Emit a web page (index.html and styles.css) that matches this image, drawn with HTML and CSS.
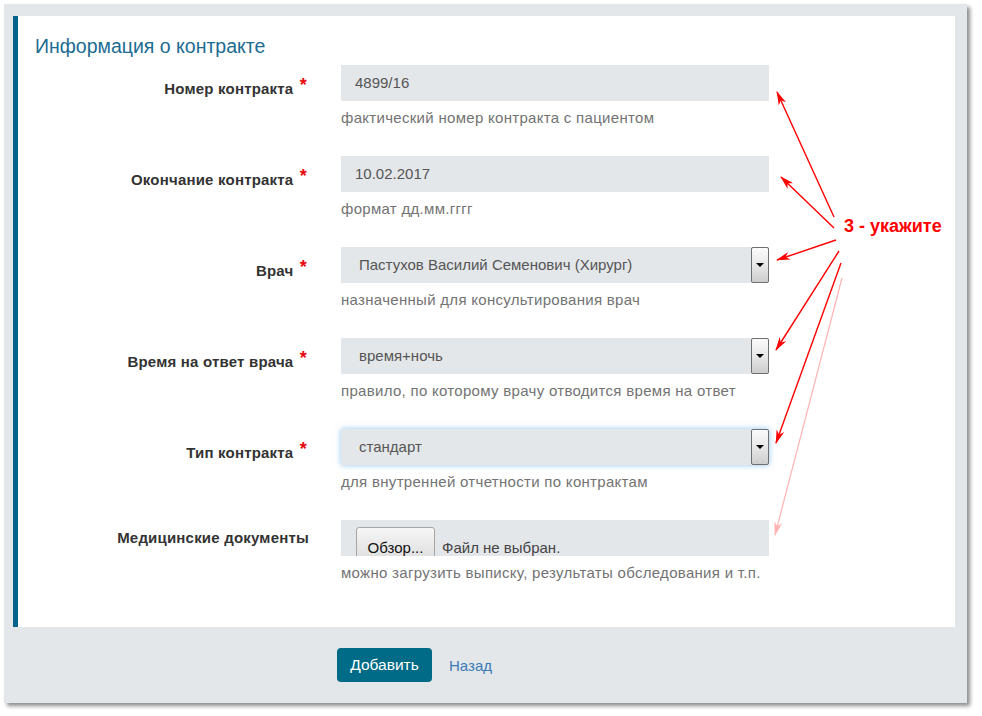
FILE: index.html
```html
<!DOCTYPE html>
<html lang="ru">
<head>
    <meta charset="UTF-8">
    <title>Информация о контракте</title>
    <link rel="stylesheet" href="styles.css">
</head>
<body>

<div class="frame">
    <div class="card">
        <h3 class="card-title">Информация о контракте</h3>

        <div class="row">
            <label class="row-label">Номер контракта <span class="req">*</span></label>
            <div class="row-control">
                <div class="field">4899/16</div>
                <p class="help">фактический номер контракта с пациентом</p>
            </div>
        </div>

        <div class="row">
            <label class="row-label">Окончание контракта <span class="req">*</span></label>
            <div class="row-control">
                <div class="field">10.02.2017</div>
                <p class="help">формат дд.мм.гггг</p>
            </div>
        </div>

        <div class="row">
            <label class="row-label">Врач <span class="req">*</span></label>
            <div class="row-control">
                <div class="field select">
                    <span class="select-text">Пастухов Василий Семенович (Хирург)</span>
                    <span class="select-btn"><i class="caret"></i></span>
                </div>
                <p class="help">назначенный для консультирования врач</p>
            </div>
        </div>

        <div class="row">
            <label class="row-label">Время на ответ врача <span class="req">*</span></label>
            <div class="row-control">
                <div class="field select">
                    <span class="select-text">время+ночь</span>
                    <span class="select-btn"><i class="caret"></i></span>
                </div>
                <p class="help">правило, по которому врачу отводится время на ответ</p>
            </div>
        </div>

        <div class="row">
            <label class="row-label">Тип контракта <span class="req">*</span></label>
            <div class="row-control">
                <div class="field select focused">
                    <span class="select-text">стандарт</span>
                    <span class="select-btn"><i class="caret"></i></span>
                </div>
                <p class="help">для внутренней отчетности по контрактам</p>
            </div>
        </div>

        <div class="row">
            <label class="row-label row-label-plain">Медицинские документы</label>
            <div class="row-control">
                <div class="field file">
                    <span class="file-btn">Обзор...</span>
                    <span class="file-name">Файл не выбран.</span>
                </div>
                <p class="help">можно загрузить выписку, результаты обследования и т.п.</p>
            </div>
        </div>
    </div>

    <div class="footer">
        <button class="btn-primary">Добавить</button>
        <a href="#" class="link-back">Назад</a>
    </div>
</div>

<!-- annotation drawn over the screenshot -->
<svg class="notes" width="982" height="716" viewBox="0 0 982 716">
    <defs>
        <marker id="head" markerWidth="14" markerHeight="8" refX="13" refY="4" orient="auto" markerUnits="userSpaceOnUse">
            <path d="M0,0 L14,4 L0,8 L4,4 z" fill="#ff0000"/>
        </marker>
        <marker id="head-faint" markerWidth="14" markerHeight="8" refX="13" refY="4" orient="auto" markerUnits="userSpaceOnUse">
            <path d="M0,0 L14,4 L0,8 L4,4 z" fill="#ffb3b3"/>
        </marker>
    </defs>
    <g stroke="#ff0000" stroke-width="1.4" fill="none">
        <line x1="834" y1="217" x2="777" y2="92" marker-end="url(#head)"/>
        <line x1="834" y1="228" x2="781" y2="177" marker-end="url(#head)"/>
        <line x1="836" y1="240" x2="777" y2="260" marker-end="url(#head)"/>
        <line x1="839" y1="251" x2="776" y2="350" marker-end="url(#head)"/>
        <line x1="841" y1="263" x2="776" y2="443" marker-end="url(#head)"/>
    </g>
    <line x1="842" y1="278" x2="775" y2="535" stroke="#ffb3b3" stroke-width="1.2" marker-end="url(#head-faint)"/>
</svg>
<div class="note-text">3 - укажите</div>

</body>
</html>
```

FILE: styles.css
```css
body {
    margin: 0;
    background: #fff;
    font-family: "Liberation Sans", Arial, sans-serif;
    font-size: 15px;
    color: #333;
    position: relative;
    width: 982px;
    height: 716px;
    overflow: hidden;
}

.frame {
    margin: 4px 0 0 4px;
    width: 963px;
    height: 699px;
    box-sizing: border-box;
    padding: 12px 12px 0 9px;
    background: #e3e7ea;
    box-shadow: 3px 3px 4px rgba(0, 0, 0, 0.45);
    display: flex;
    flex-direction: column;
}

.card {
    height: 611px;
    box-sizing: border-box;
    background: #fff;
    border-left: 5px solid #04638b;
    padding: 20px 0 0 0;
}

.card-title {
    margin: 0 0 9px 17px;
    font-size: 19.5px;
    line-height: 20px;
    font-weight: normal;
    color: #1c6c92;
}

.row {
    display: grid;
    grid-template-columns: 292px 428px;
    column-gap: 31px;
    margin-bottom: 28px;
}

.row-label {
    padding: 13px 3px 0 0;
    text-align: right;
    font-weight: bold;
    line-height: 20px;
    letter-spacing: 0.2px;
    color: #333;
}

.row-label-plain {
    padding: 8px 1px 0 0;
}

.req {
    color: #e8070e;
    font-size: 18px;
    position: relative;
    top: -3px;
    margin-left: 2px;
}

.field {
    height: 36px;
    box-sizing: border-box;
    background: #e4e7ea;
    padding: 0 14px;
    display: flex;
    align-items: center;
    line-height: 20px;
    color: #555;
}

.select {
    padding: 0 0 0 18px;
}

.select-text {
    flex: 1;
}

.select-btn {
    width: 18px;
    height: 36px;
    box-sizing: border-box;
    border: 1px solid #6f6f6f;
    border-radius: 2px;
    background: linear-gradient(#fbfbfb, #e8e8e8 50%, #cdcdcd);
    display: flex;
    align-items: center;
    justify-content: center;
}

.caret {
    width: 0;
    height: 0;
    border-left: 4px solid transparent;
    border-right: 4px solid transparent;
    border-top: 4px solid #000;
}

.focused {
    box-shadow: 0 0 6px rgba(102, 175, 233, 0.7);
}

.file {
    align-items: flex-start;
    overflow: hidden;
    padding: 7px 15px 0;
}

.file-btn {
    width: 79px;
    height: 34px;
    flex: none;
    box-sizing: border-box;
    border: 1px solid #a5a5a5;
    border-radius: 3px;
    background: linear-gradient(#f6f6f6, #dedede);
    color: #111;
    text-align: center;
    padding-top: 10px;
}

.file-name {
    margin-left: 7px;
    padding-top: 11px;
    color: #444;
}

.help {
    margin: 7px 0 0;
    line-height: 20px;
    letter-spacing: 0.3px;
    color: #737373;
}

.footer {
    flex: 1;
    display: flex;
    align-items: center;
    gap: 17px;
    padding-left: 324px;
}

.btn-primary {
    width: 95px;
    height: 34px;
    border: none;
    border-radius: 4px;
    background: #006b87;
    color: #fff;
    font-family: inherit;
    font-size: 15.5px;
}

.link-back {
    color: #3a7ab6;
    text-decoration: none;
}

.notes {
    position: absolute;
    left: 0;
    top: 0;
    pointer-events: none;
}

.note-text {
    position: absolute;
    left: 844px;
    top: 216px;
    color: #ff0000;
    font-weight: bold;
    font-size: 18px;
    line-height: 20px;
}
```
